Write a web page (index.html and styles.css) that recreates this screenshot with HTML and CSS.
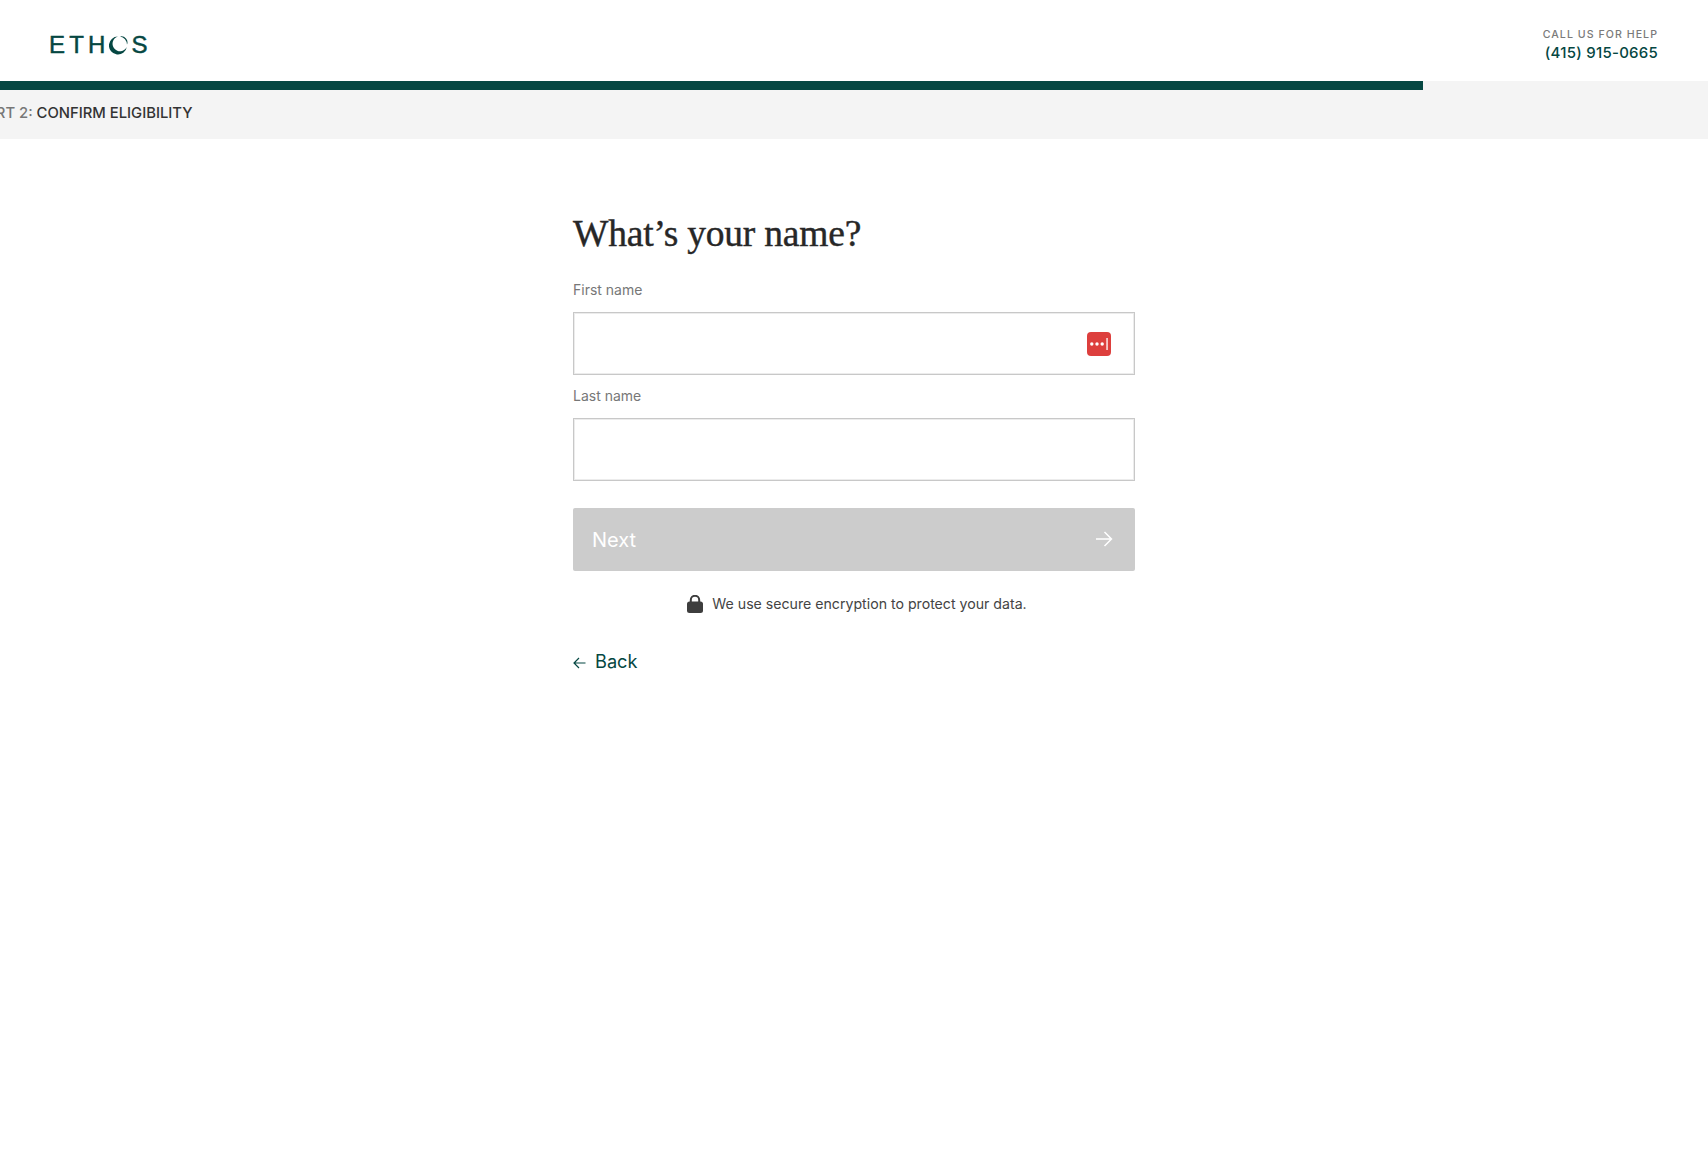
FILE: index.html
```html
<!DOCTYPE html>
<html lang="en">
<head>
    <meta charset="UTF-8">
    <meta name="viewport" content="width=device-width, initial-scale=1.0">
    <title>Ethos - What's your name?</title>
    <link rel="stylesheet" href="styles.css">
</head>
<body>
    <header class="top-bar">
        <a class="logo" href="#">
            <span>ETH</span>
            <svg class="logo-o" width="19" height="19" viewBox="0 0 19 19">
                <path d="M9 .5 A9 9 0 1 0 17.8 11 A7.5 7.5 0 1 1 9 .5 Z" fill="#054742"/>
                <path d="M11 .5 A9 9 0 0 1 18 8.6 A6 6 0 0 0 11 .5 Z" fill="#054742"/>
            </svg>
            <span>S</span>
        </a>
        <div class="help">
            <div class="help-label">CALL US FOR HELP</div>
            <div class="help-phone">(415) 915-0665</div>
        </div>
    </header>

    <div class="progress-area">
        <div class="progress-bar"></div>
        <div class="step-title"><span class="step-part">PART 2:</span> CONFIRM ELIGIBILITY</div>
    </div>

    <main class="form-wrap">
        <h1>What’s your name?</h1>
        <form>
            <label for="firstName">First name</label>
            <div class="field">
                <input type="text" id="firstName">
                <!-- Password manager badge -->
                <svg class="pw-badge" width="24" height="24" viewBox="0 0 24 24">
                    <rect width="24" height="24" rx="4" fill="#dd3f3d"/>
                    <circle cx="4.8" cy="12" r="1.7" fill="#fff"/>
                    <circle cx="10" cy="12" r="1.7" fill="#fff"/>
                    <circle cx="15.2" cy="12" r="1.7" fill="#fff"/>
                    <rect x="19.4" y="6" width="1.3" height="12" fill="#fff"/>
                </svg>
            </div>

            <label for="lastName">Last name</label>
            <div class="field">
                <input type="text" id="lastName">
            </div>

            <button type="button" class="next-btn" disabled>
                <span>Next</span>
                <svg class="next-arrow" width="18" height="16" viewBox="0 0 18 16" fill="none" stroke="#fff" stroke-width="1.5">
                    <path d="M1 8 H16.5 M9.5 1 L16.5 8 L9.5 15"/>
                </svg>
            </button>
        </form>

        <p class="secure-note">
            <svg width="16" height="18" viewBox="0 0 16 18">
                <path d="M3.8 8 V5 A4.2 4.2 0 0 1 12.2 5 V8" fill="none" stroke="#3d3d3d" stroke-width="2"/>
                <rect y="6.5" width="16" height="11.5" rx="2.5" fill="#3d3d3d"/>
            </svg>
            <span>We use secure encryption to protect your data.</span>
        </p>

        <a class="back-link" href="#">
            <svg width="13" height="12" viewBox="0 0 13 12" fill="none" stroke="#054742" stroke-width="1.2">
                <path d="M12.5 6 H1 M6 1 L1 6 L6 11"/>
            </svg>
            <span>Back</span>
        </a>
    </main>
</body>
</html>
```

FILE: styles.css
```css
/* General */
body {
    margin: 0;
    font-family: 'Inter', 'Liberation Sans', sans-serif;
    background: #fff;
    color: #272727;
}

/* Header */
.top-bar {
    height: 81px;
    display: flex;
    justify-content: space-between;
    align-items: flex-start;
    padding: 0 50px 0 49px;
}

.logo {
    display: flex;
    align-items: center;
    height: 18px;
    margin-top: 36px;
    color: #054742;
    font-family: 'Liberation Sans', sans-serif;
    font-size: 24px;
    letter-spacing: 4.2px;
    text-decoration: none;
    -webkit-text-stroke: .5px #054742;
}

.logo-o {
    margin: 0 4px 0 -1px;
}

.help {
    margin-top: 28px;
    text-align: right;
}

.help-label {
    font-size: 10.6px;
    line-height: 14px;
    font-weight: 500;
    letter-spacing: 1.05px;
    color: #7a7a7a;
}

.help-phone {
    margin-top: 1px;
    font-size: 15px;
    line-height: 20px;
    font-weight: 500;
    letter-spacing: .25px;
    color: #054742;
}

/* Progress */
.progress-area {
    height: 58px;
    background: #f4f4f4;
    overflow: hidden;
}

.progress-bar {
    width: 1423px;
    height: 9px;
    background: #054742;
}

.step-title {
    margin: 13px 0 0 -23px;
    font-size: 14.8px;
    line-height: 20px;
    font-weight: 500;
    white-space: nowrap;
    color: #333;
}

.step-part {
    color: #777;
}

/* Form */
.form-wrap {
    width: 562px;
    margin: 0 auto;
    padding-top: 81px;
}

h1 {
    margin: 0 0 32px;
    font-family: 'Liberation Serif', serif;
    font-size: 37.5px;
    line-height: 28px;
    font-weight: 400;
    letter-spacing: -.2px;
    color: #272727;
    -webkit-text-stroke: .4px #272727;
}

label {
    display: block;
    font-size: 14px;
    line-height: 20px;
    color: #777;
    margin-bottom: 12px;
}

.field {
    position: relative;
    margin-bottom: 11px;
}

.field input {
    display: block;
    width: 100%;
    height: 63px;
    box-sizing: border-box;
    border: 1px solid #c8c8c8;
    box-shadow: inset 0 0 0 1px #ececec;
    background: #fff;
    outline: none;
}

.pw-badge {
    position: absolute;
    top: 20px;
    right: 24px;
}

.next-btn {
    display: flex;
    justify-content: space-between;
    align-items: center;
    width: 100%;
    height: 63px;
    margin-top: 27px;
    padding: 0 22px 0 19px;
    border: none;
    border-radius: 2px;
    background: #ccc;
    color: #fff;
    font-family: inherit;
    font-size: 20px;
}

.next-arrow {
    margin-bottom: 2px;
}

.secure-note {
    display: flex;
    justify-content: center;
    align-items: center;
    gap: 9px;
    margin: 22px 0 0;
    padding-left: 6px;
    font-size: 14.15px;
    line-height: 22px;
    color: #444;
}

.back-link {
    display: inline-flex;
    align-items: center;
    gap: 9px;
    margin-top: 33px;
    font-size: 18.2px;
    line-height: 26px;
    color: #054742;
    text-decoration: none;
}

.back-link svg {
    margin-top: 4px;
}
```
